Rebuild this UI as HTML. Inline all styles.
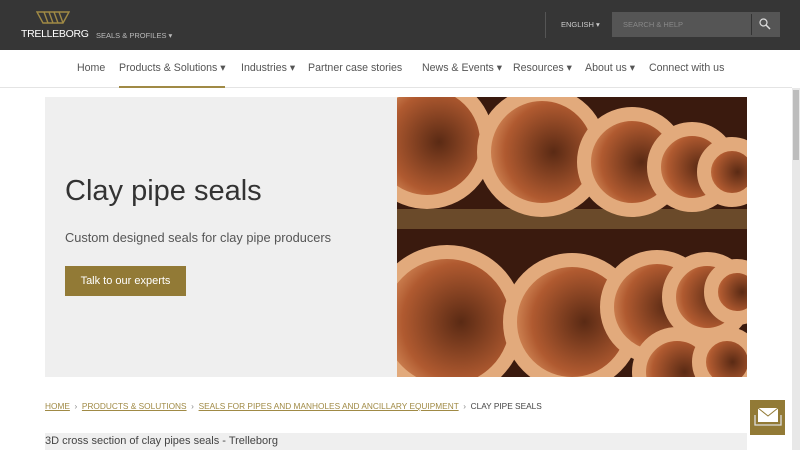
<!DOCTYPE html>
<html><head><style>
*{margin:0;padding:0;box-sizing:border-box}
body{width:800px;height:450px;overflow:hidden;background:#fff;font-family:"Liberation Sans",sans-serif;position:relative}
.top{position:absolute;left:0;top:0;width:800px;height:50px;background:#363636}
.nav{position:absolute;top:50px;left:0;width:792px;height:38px;border-bottom:1px solid #e4e4e4}
.nav span{position:absolute;top:12px;font-size:10.6px;color:#555;white-space:nowrap}
.sb{position:absolute;right:0;top:88px;width:8px;height:362px;background:#e8e8e8}
.sb i{position:absolute;left:1px;top:2px;width:6px;height:70px;background:#bdbdbd}
</style></head><body>
<div class="top">
<svg style="position:absolute;left:36px;top:11px" width="34" height="13" viewBox="0 0 34 13"><path d="M1 1H33L27 12H7Z M8 1l4 11M13 1l4 11M18 1l4 11M23 1l4 11" stroke="#a08a45" stroke-width="1.4" fill="none"/></svg>
<div style="position:absolute;left:21px;top:28px;color:#fff;font-size:10.5px;letter-spacing:-0.3px">TRELLEBORG</div>
<div style="position:absolute;left:96px;top:31px;color:#bbb;font-size:7.5px;white-space:nowrap">SEALS &amp; PROFILES ▾</div>
<div style="position:absolute;left:545px;top:12px;width:1px;height:26px;background:#555"></div>
<div style="position:absolute;left:561px;top:20px;color:#ccc;font-size:7.5px">ENGLISH ▾</div>
<div style="position:absolute;left:612px;top:12px;width:168px;height:25px;background:#555"></div>
<div style="position:absolute;left:623px;top:20px;color:#888;font-size:7.5px">SEARCH &amp; HELP</div>
<div style="position:absolute;left:751px;top:14px;width:1px;height:21px;background:#333"></div>
<svg style="position:absolute;left:759px;top:18px" width="12" height="12"><circle cx="4.5" cy="4.5" r="3.5" stroke="#ddd" fill="none" stroke-width="1.2"/><path d="M7 7l4 4" stroke="#ddd" stroke-width="1.5"/></svg>
</div>
<div class="nav">
<span style="left:77px">Home</span>
<span style="left:119px">Products &amp; Solutions ▾</span>
<div style="position:absolute;left:119px;top:36px;width:106px;height:2px;background:#a08a45"></div>
<span style="left:241px">Industries ▾</span>
<span style="left:308px">Partner case stories</span>
<span style="left:422px">News &amp; Events ▾</span>
<span style="left:513px">Resources ▾</span>
<span style="left:585px">About us ▾</span>
<span style="left:649px">Connect with us</span>
</div>
<div style="position:absolute;left:45px;top:97px;width:352px;height:280px;background:#efefef"></div>
<div style="position:absolute;left:65px;top:175px;font-size:29px;color:#333">Clay pipe seals</div>
<div style="position:absolute;left:65px;top:230px;font-size:12.8px;color:#555;white-space:nowrap">Custom designed seals for clay pipe producers</div>
<div style="position:absolute;left:65px;top:266px;width:121px;height:30px;background:#927a36;color:#fff;font-size:11px;text-align:center;line-height:30px">Talk to our experts</div>
<svg style="position:absolute;left:397px;top:97px" width="350" height="280" viewBox="0 0 350 280">
<defs><radialGradient id="g" cx="0.6" cy="0.5" r="0.6"><stop offset="0" stop-color="#5a2a14"/><stop offset="0.7" stop-color="#b05a30"/><stop offset="1" stop-color="#d8905e"/></radialGradient></defs>
<rect width="350" height="280" fill="#3a1a0e"/>
<rect y="112" width="350" height="20" fill="#6a4a2a"/>
<g stroke="#e2aa7c" stroke-width="14" fill="url(#g)">
<circle cx="30" cy="45" r="60"/><circle cx="145" cy="55" r="58"/><circle cx="235" cy="65" r="48"/><circle cx="295" cy="70" r="38"/><circle cx="335" cy="75" r="28"/>
<circle cx="50" cy="225" r="70"/><circle cx="175" cy="225" r="62"/><circle cx="260" cy="210" r="50"/><circle cx="310" cy="200" r="38"/><circle cx="340" cy="195" r="26"/>
<circle cx="280" cy="275" r="38"/><circle cx="330" cy="265" r="28"/>
</g></svg>
<div style="position:absolute;left:45px;top:401px;font-size:8.3px;color:#a08a45;white-space:nowrap"><u>HOME</u> <span style="color:#888">&nbsp;›&nbsp;</span> <u>PRODUCTS &amp; SOLUTIONS</u> <span style="color:#888">&nbsp;›&nbsp;</span> <u>SEALS FOR PIPES AND MANHOLES AND ANCILLARY EQUIPMENT</u> <span style="color:#888">&nbsp;›&nbsp;</span> <span style="color:#444">CLAY PIPE SEALS</span></div>
<div style="position:absolute;left:45px;top:433px;width:702px;height:17px;background:#efefef;font-size:11px;color:#444;padding-top:2px">3D cross section of clay pipes seals - Trelleborg</div>
<div style="position:absolute;left:750px;top:400px;width:35px;height:35px;background:#927a36"></div>
<svg style="position:absolute;left:754px;top:406px" width="28" height="24"><rect x="4" y="2" width="20" height="14" fill="#fff"/><path d="M4 2l10 8 10-8" stroke="#927a36" fill="none"/><path d="M1 9v10h26V9" stroke="#ddd" fill="none" stroke-width="1.3"/></svg>
<div class="sb"><i></i></div>
</body></html>
